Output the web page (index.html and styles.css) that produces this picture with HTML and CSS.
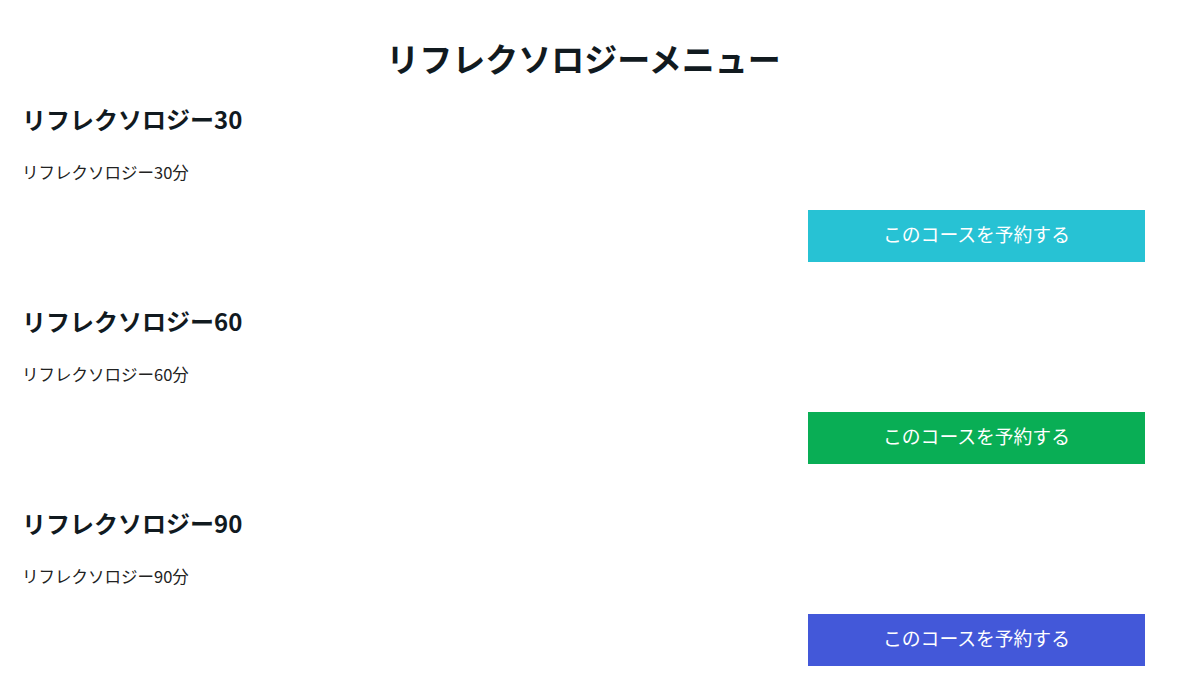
FILE: index.html
```html
<!DOCTYPE html>
<html lang="ja">
<head>
    <meta charset="UTF-8">
    <meta name="viewport" content="width=device-width, initial-scale=1.0">
    <title>リフレクソロジーメニュー</title>
    <link rel="stylesheet" href="styles.css">
</head>
<body>
    <div class="container">
        <h1>リフレクソロジーメニュー</h1>

        <div class="course">
            <h2>リフレクソロジー30</h2>
            <p>リフレクソロジー30分</p>
            <button class="btn btn-cyan">このコースを予約する</button>
        </div>

        <div class="course">
            <h2>リフレクソロジー60</h2>
            <p>リフレクソロジー60分</p>
            <button class="btn btn-green">このコースを予約する</button>
        </div>

        <div class="course">
            <h2>リフレクソロジー90</h2>
            <p>リフレクソロジー90分</p>
            <button class="btn btn-blue">このコースを予約する</button>
        </div>
    </div>
</body>
</html>
```

FILE: styles.css
```css
/* Reset */
body, h1, h2, p, button {
    margin: 0;
    padding: 0;
    box-sizing: border-box;
}

body {
    font-family: "Noto Sans CJK JP", "Noto Sans", sans-serif;
    background-color: #fff;
    color: #111a1f;
}

.container {
    width: 1123px;
    margin-left: 22px;
    padding-top: 38px;
    display: flex;
    flex-direction: column;
    gap: 43px;
}

h1 {
    font-size: 33px;
    line-height: 40px;
    text-align: center;
    font-weight: 700;
    margin-bottom: -18px;
}

.course {
    display: flex;
    flex-direction: column;
}

h2 {
    font-size: 24px;
    line-height: 32px;
    font-weight: 700;
    margin-bottom: 25px;
}

p {
    font-size: 16.5px;
    line-height: 24px;
    color: #222;
    margin-bottom: 26px;
}

/* Reserve buttons */
.btn {
    align-self: flex-end;
    width: 337px;
    height: 52px;
    padding-bottom: 5px;
    border: none;
    color: #fff;
    font-family: inherit;
    font-size: 18.8px;
    cursor: pointer;
}

.btn-cyan {
    background-color: #27c2d4;
}

.btn-green {
    background-color: #09ae55;
}

.btn-blue {
    background-color: #4358d9;
}
```
